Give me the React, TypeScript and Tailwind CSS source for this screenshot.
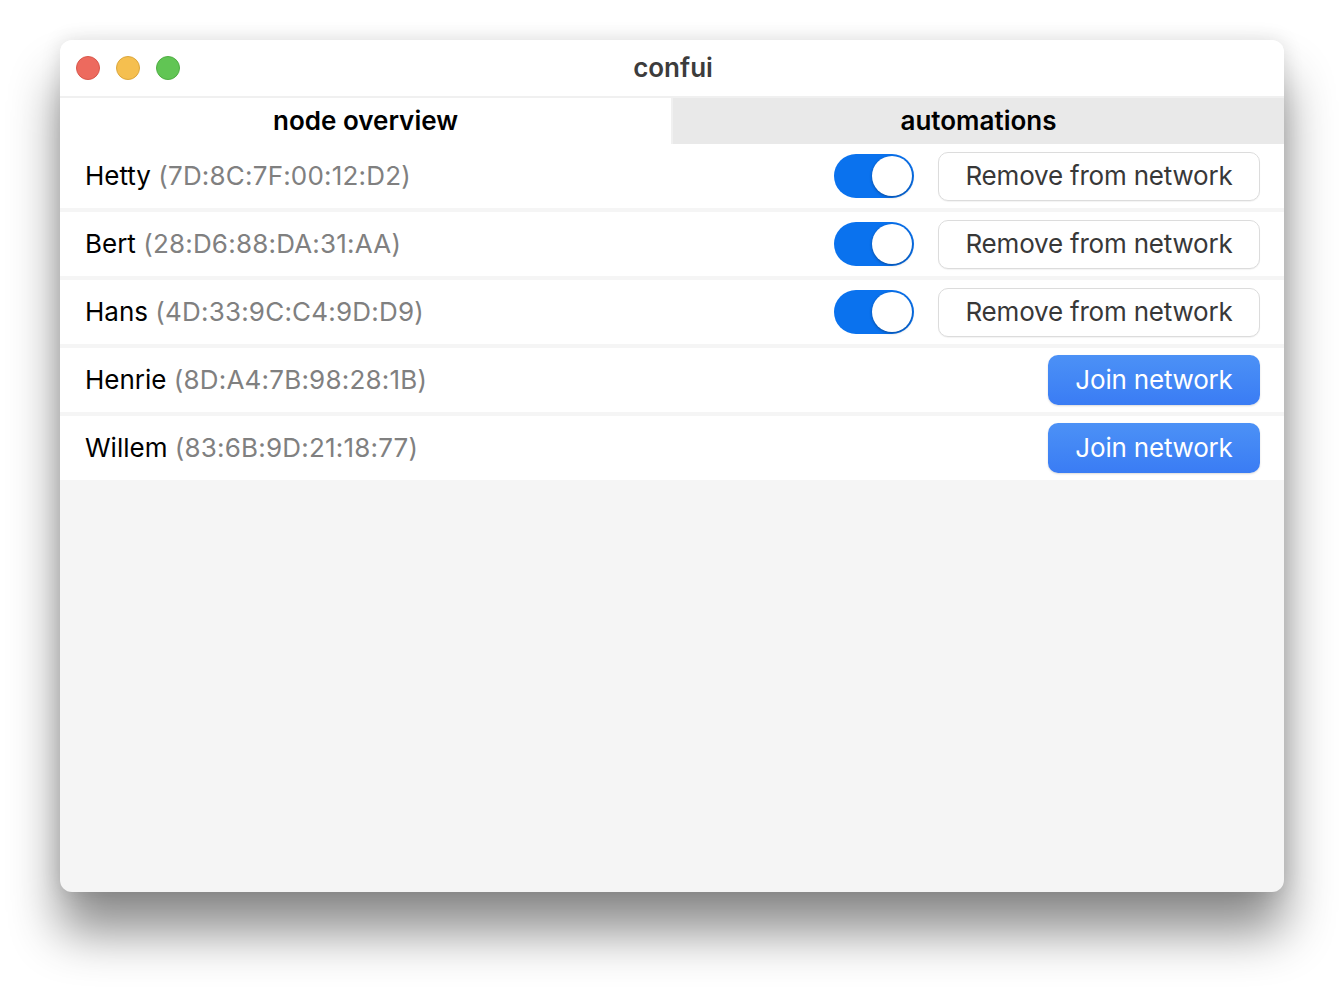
const nodes = [
    { name: "Hetty", mac: "7D:8C:7F:00:12:D2", joined: true },
    { name: "Bert", mac: "28:D6:88:DA:31:AA", joined: true },
    { name: "Hans", mac: "4D:33:9C:C4:9D:D9", joined: true },
    { name: "Henrie", mac: "8D:A4:7B:98:28:1B", joined: false },
    { name: "Willem", mac: "83:6B:9D:21:18:77", joined: false },
]

const Toggle = () => (
    <div className="w-[80px] h-[44px] rounded-full bg-[#0a72ee] flex items-center justify-end pr-[2px]">
        <div className="w-[40px] h-[40px] rounded-full bg-white shadow-[0_1px_3px_rgba(0,0,0,0.35)]"></div>
    </div>
)

const NodeRow = ({ name, mac, joined }: { name: string; mac: string; joined: boolean }) => (
    <div className="h-[64px] bg-white flex items-center pl-[25px] pr-[24px]">
        <div className="flex-1 text-[26px] text-black pb-[2px]">
            {name} <span className="text-[#808080] tracking-[0.2px]">({mac})</span>
        </div>
        {joined ? (
            <div className="flex items-center gap-[24px]">
                <Toggle />
                <button className="h-[49px] w-[322px] pb-[2px] rounded-[10px] border border-[#dcdcdc] bg-white text-[26px] tracking-[-0.2px] text-[#383838] shadow-[0_1px_1px_rgba(0,0,0,0.05)]">
                    Remove from network
                </button>
            </div>
        ) : (
            <button className="h-[50px] w-[212px] pb-[2px] rounded-[10px] bg-gradient-to-b from-[#4c91f6] to-[#3a7cf4] text-[26px] tracking-[-0.2px] text-white shadow-[0_1px_2px_rgba(0,0,0,0.15)]">
                Join network
            </button>
        )}
    </div>
)

export default function App() {
    return (
        <div className="w-[1344px] h-[1002px] bg-white pt-[40px] px-[60px]" style={{ fontFamily: "Inter, 'Noto Sans', sans-serif" }}>
            <div className="w-[1224px] h-[852px] rounded-[12px] overflow-hidden bg-[#f5f5f5] flex flex-col shadow-[0_40px_50px_rgba(0,0,0,0.45),0_0_20px_rgba(0,0,0,0.12)]">
                <div className="h-[56px] bg-white relative flex items-center justify-center shrink-0">
                    <div className="absolute left-[16px] top-[16px] flex gap-[16px]">
                        <div className="w-[24px] h-[24px] rounded-full bg-[#ed6a5e] border border-[#d9574b]"></div>
                        <div className="w-[24px] h-[24px] rounded-full bg-[#f5bf4f] border border-[#dca73c]"></div>
                        <div className="w-[24px] h-[24px] rounded-full bg-[#61c554] border border-[#4fae43]"></div>
                    </div>
                    <span className="text-[26px] font-semibold text-[#3c3c3c] pl-[2px] pb-[2px]">confui</span>
                </div>
                <div className="h-[48px] flex border-t-2 border-[#f0f0f0] shrink-0">
                    <div className="flex-1 bg-white border-r-2 border-[#f0f0f0] flex items-center justify-center text-[26px] font-semibold text-black pb-[2px]">
                        node overview
                    </div>
                    <div className="flex-1 bg-[#e9e9e9] flex items-center justify-center text-[26px] font-semibold text-black pb-[2px]">
                        automations
                    </div>
                </div>
                <div className="flex flex-col gap-[4px]">
                    {nodes.map((n) => (
                        <NodeRow key={n.mac} {...n} />
                    ))}
                </div>
            </div>
        </div>
    )
}
